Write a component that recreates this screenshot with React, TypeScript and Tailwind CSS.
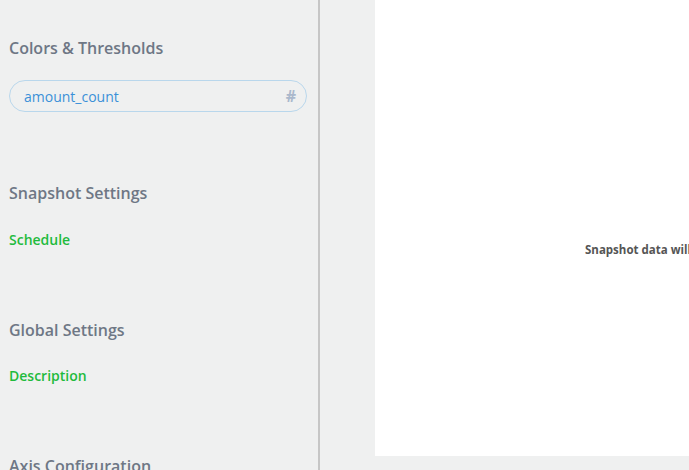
import React from "react";

function Heading({ children }: { children: React.ReactNode }) {
  return <div className="text-[16px] leading-[20px] text-[#6e7785] font-semibold">{children}</div>;
}

function Link({ children }: { children: React.ReactNode }) {
  return <div className="text-[14px] leading-[20px] text-[#1fbb3d] font-semibold">{children}</div>;
}

export default function App() {
  return (
    <div className="flex h-[470px] w-[689px] overflow-hidden bg-[#eff0f0] font-['Open_Sans','Noto_Sans',sans-serif]">
      <aside className="w-[318px] shrink-0 pl-[9px] pr-[11px] pt-[38px]">
        <Heading>Colors &amp; Thresholds</Heading>
        <div className="mt-[22px] flex h-[32px] items-center justify-between rounded-full border border-[#b9d7ec] pl-[14px] pr-[10px]">
          <span className="text-[14px] text-[#3b90d8]">amount_count</span>
          <span className="text-[16px] font-bold text-[#aab8cc]">#</span>
        </div>
        <div className="mt-[71px]">
          <Heading>Snapshot Settings</Heading>
        </div>
        <div className="mt-[27px]">
          <Link>Schedule</Link>
        </div>
        <div className="mt-[70px]">
          <Heading>Global Settings</Heading>
        </div>
        <div className="mt-[26px]">
          <Link>Description</Link>
        </div>
        <div className="mt-[70px]">
          <Heading>Axis Configuration</Heading>
        </div>
      </aside>
      <div className="w-[2px] shrink-0 bg-[#c6c6c6]" />
      <main className="flex min-w-0 flex-1 pl-[55px] pb-[14px]">
        <div className="flex flex-1 items-center bg-white pl-[210px] pt-[44px]">
          <span className="whitespace-nowrap text-[11.5px] font-bold text-[#555555]">
            Snapshot data will be available after the first run
          </span>
        </div>
      </main>
    </div>
  );
}
